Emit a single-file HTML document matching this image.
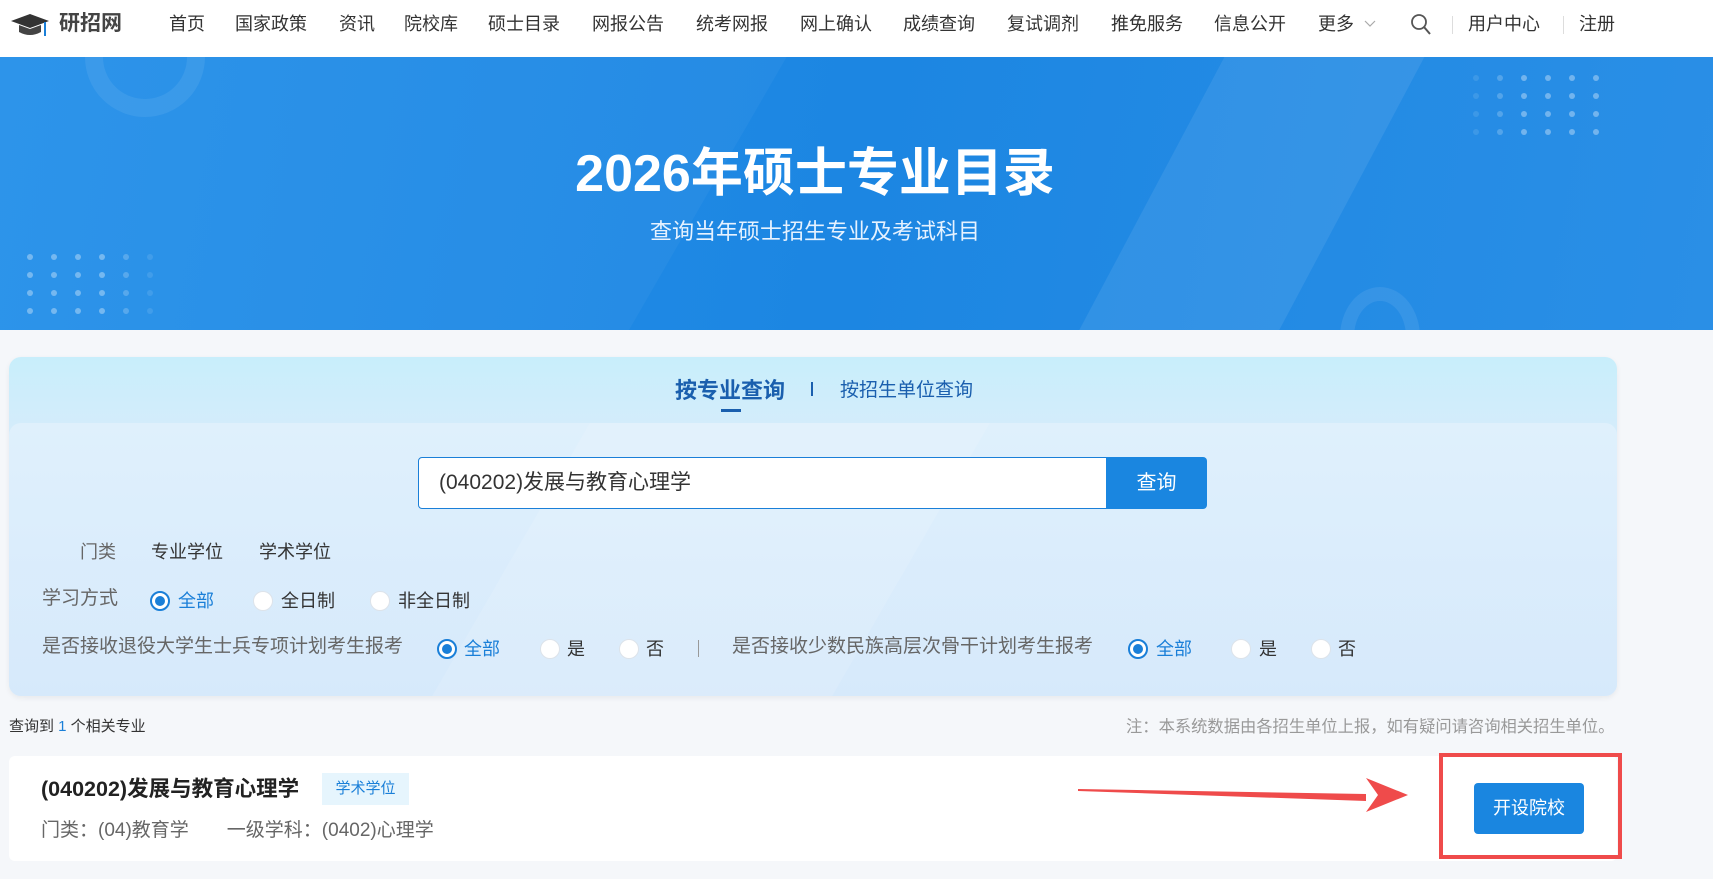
<!DOCTYPE html>
<html><head><meta charset="utf-8"><style>
*{margin:0;padding:0;box-sizing:border-box}
body{width:1713px;height:879px;overflow:hidden;background:#f5f7fa;font-family:"Liberation Sans","Noto Sans CJK SC",sans-serif;color:#333;position:relative}
.abs{position:absolute;white-space:nowrap}
.nav{position:absolute;left:0;top:0;width:1713px;height:57px;background:#fff}
.nav .i{position:absolute;top:12px;font-size:18px;color:#333;line-height:24px}
.banner{position:absolute;left:0;top:57px;width:1713px;height:273px;background:linear-gradient(100deg,#2590ea 0%,#1c86e2 50%,#2a8fe6 100%);overflow:hidden}
.panel{position:absolute;left:9px;top:357px;width:1608px;height:339px;border-radius:12px;background:linear-gradient(180deg,#c8eefb 0%,#d6ecfb 25%,#d9eafb 100%);box-shadow:0 2px 6px rgba(0,0,0,.06);overflow:hidden}
.radio{position:absolute;width:20px;height:20px;border-radius:50%;background:#fff;border:1px solid #dde3ea}
.radio.on{border:2px solid #1a7fd8;background:#fff}
.radio.on::after{content:"";position:absolute;left:3px;top:3px;width:10px;height:10px;border-radius:50%;background:#1a7fd8}
.t18{font-size:18px;line-height:24px}
</style></head><body>
<div class="nav">
  <svg class="abs" style="left:9px;top:12px" width="42" height="28" viewBox="0 0 42 28"><path d="M2 9 L21 2 L40 9 L21 16 Z" fill="#333"/><path d="M10 13 L10 20 Q21 26 32 20 L32 13 L21 17 Z" fill="#444"/><path d="M36 10 L36 24" stroke="#1a7fd8" stroke-width="2"/></svg>
  <div class="abs" style="left:59px;top:11px;font-size:21px;font-weight:bold;color:#444;line-height:26px">研招网</div>
  <div class="i" style="left:169px">首页</div>
  <div class="i" style="left:235px">国家政策</div>
  <div class="i" style="left:339px">资讯</div>
  <div class="i" style="left:404px">院校库</div>
  <div class="i" style="left:488px">硕士目录</div>
  <div class="i" style="left:592px">网报公告</div>
  <div class="i" style="left:696px">统考网报</div>
  <div class="i" style="left:800px">网上确认</div>
  <div class="i" style="left:903px">成绩查询</div>
  <div class="i" style="left:1007px">复试调剂</div>
  <div class="i" style="left:1111px">推免服务</div>
  <div class="i" style="left:1214px">信息公开</div>
  <div class="i" style="left:1318px">更多</div>
  <svg class="abs" style="left:1364px;top:19px" width="12" height="10"><path d="M1 2 L6 7 L11 2" stroke="#aaa" fill="none" stroke-width="1.2"/></svg>
  <svg class="abs" style="left:1410px;top:13px" width="22" height="24"><circle cx="9" cy="9" r="7" stroke="#555" stroke-width="1.8" fill="none"/><path d="M14 14 L20 21" stroke="#555" stroke-width="2"/></svg>
  <div class="abs" style="left:1452px;top:16px;width:1px;height:18px;background:#ddd"></div>
  <div class="i" style="left:1468px">用户中心</div>
  <div class="abs" style="left:1563px;top:16px;width:1px;height:18px;background:#ddd"></div>
  <div class="i" style="left:1579px">注册</div>
</div>
<div class="banner">
  <div class="abs" style="left:85px;top:-60px;width:120px;height:120px;border-radius:50%;border:18px solid rgba(255,255,255,.07)"></div>
  <div class="abs" style="left:-200px;top:-50px;width:900px;height:400px;background:rgba(255,255,255,.04);transform:skewX(-30deg)"></div>
  <div class="abs" style="left:1150px;top:-20px;width:200px;height:320px;background:rgba(255,255,255,.08);transform:skewX(-28deg)"></div>
  <div class="abs" style="left:1340px;top:230px;width:80px;height:100px;border-radius:50%;border:14px solid rgba(255,255,255,.08)"></div>
  <svg class="abs" style="left:24px;top:194px" width="130" height="80"><g fill="rgba(255,255,255,.35)">
  <circle cx="6" cy="6" r="3"/><circle cx="30" cy="6" r="3"/><circle cx="54" cy="6" r="3"/><circle cx="78" cy="6" r="3"/><circle cx="102" cy="6" r="3" opacity=".6"/><circle cx="126" cy="6" r="3" opacity=".3"/>
  <circle cx="6" cy="24" r="3"/><circle cx="30" cy="24" r="3"/><circle cx="54" cy="24" r="3"/><circle cx="78" cy="24" r="3"/><circle cx="102" cy="24" r="3" opacity=".6"/><circle cx="126" cy="24" r="3" opacity=".3"/>
  <circle cx="6" cy="42" r="3"/><circle cx="30" cy="42" r="3"/><circle cx="54" cy="42" r="3"/><circle cx="78" cy="42" r="3"/><circle cx="102" cy="42" r="3" opacity=".6"/><circle cx="126" cy="42" r="3" opacity=".3"/>
  <circle cx="6" cy="60" r="3"/><circle cx="30" cy="60" r="3"/><circle cx="54" cy="60" r="3"/><circle cx="78" cy="60" r="3"/><circle cx="102" cy="60" r="3" opacity=".6"/><circle cx="126" cy="60" r="3" opacity=".3"/></g></svg>
  <svg class="abs" style="left:1470px;top:15px" width="130" height="80"><g fill="rgba(255,255,255,.35)">
  <circle cx="126" cy="6" r="3"/><circle cx="102" cy="6" r="3"/><circle cx="78" cy="6" r="3"/><circle cx="54" cy="6" r="3"/><circle cx="30" cy="6" r="3" opacity=".6"/><circle cx="6" cy="6" r="3" opacity=".3"/>
  <circle cx="126" cy="24" r="3"/><circle cx="102" cy="24" r="3"/><circle cx="78" cy="24" r="3"/><circle cx="54" cy="24" r="3"/><circle cx="30" cy="24" r="3" opacity=".6"/><circle cx="6" cy="24" r="3" opacity=".3"/>
  <circle cx="126" cy="42" r="3"/><circle cx="102" cy="42" r="3"/><circle cx="78" cy="42" r="3"/><circle cx="54" cy="42" r="3"/><circle cx="30" cy="42" r="3" opacity=".6"/><circle cx="6" cy="42" r="3" opacity=".3"/>
  <circle cx="126" cy="60" r="3"/><circle cx="102" cy="60" r="3"/><circle cx="78" cy="60" r="3"/><circle cx="54" cy="60" r="3"/><circle cx="30" cy="60" r="3" opacity=".6"/><circle cx="6" cy="60" r="3" opacity=".3"/></g></svg>
  <div class="abs" style="left:0;width:1630px;top:86px;text-align:center;font-size:52px;font-weight:bold;color:#fff;line-height:62px">2026年硕士专业目录</div>
  <div class="abs" style="left:0;width:1630px;top:161px;text-align:center;font-size:22px;color:#e6f2ff;line-height:28px">查询当年硕士招生专业及考试科目</div>
</div>
<div class="panel">
  <div class="abs" style="left:0;top:66px;width:1608px;height:280px;background:linear-gradient(180deg,#dff0fc,#d6e9fb);border-radius:12px 12px 0 0"></div>
  <div class="abs" style="left:500px;top:66px;width:400px;height:280px;background:rgba(255,255,255,.12);transform:skewX(-30deg)"></div>
  <div class="abs" style="left:666px;top:20px;font-size:22px;font-weight:bold;color:#1a5fae;line-height:28px">按专业查询</div>
  <div class="abs" style="left:712px;top:52px;width:20px;height:3px;background:#1a5fae"></div>
  <div class="abs" style="left:802px;top:25px;width:2px;height:14px;background:#1a5fae"></div>
  <div class="abs" style="left:831px;top:20px;font-size:19px;color:#1a5fae;line-height:28px">按招生单位查询</div>
  <div class="abs" style="left:409px;top:100px;width:689px;height:52px;background:#fff;border:1px solid #1a7fd8;border-radius:4px 0 0 4px"></div>
  <div class="abs" style="left:430px;top:112px;font-size:21px;line-height:28px;color:#333">(040202)发展与教育心理学</div>
  <div class="abs" style="left:1097px;top:100px;width:101px;height:52px;background:#1a86e0;border-radius:0 4px 4px 0;color:#fff;font-size:20px;text-align:center;line-height:52px">查询</div>
  <div class="abs t18" style="left:71px;top:183px;color:#666">门类</div>
  <div class="abs t18" style="left:142px;top:183px;color:#333">专业学位</div>
  <div class="abs t18" style="left:250px;top:183px;color:#333">学术学位</div>
  <div class="abs" style="left:33px;top:230px;color:#666;font-size:19px;line-height:24px">学习方式</div>
  <div class="radio on" style="left:141px;top:234px"></div>
  <div class="abs t18" style="left:169px;top:232px;color:#1a7fd8">全部</div>
  <div class="radio" style="left:244px;top:234px"></div>
  <div class="abs t18" style="left:272px;top:232px">全日制</div>
  <div class="radio" style="left:361px;top:234px"></div>
  <div class="abs t18" style="left:389px;top:232px">非全日制</div>
  <div class="abs" style="left:33px;top:278px;color:#666;font-size:19px;line-height:24px">是否接收退役大学生士兵专项计划考生报考</div>
  <div class="radio on" style="left:428px;top:282px"></div>
  <div class="abs t18" style="left:455px;top:280px;color:#1a7fd8">全部</div>
  <div class="radio" style="left:531px;top:282px"></div>
  <div class="abs t18" style="left:558px;top:280px">是</div>
  <div class="radio" style="left:610px;top:282px"></div>
  <div class="abs t18" style="left:637px;top:280px">否</div>
  <div class="abs" style="left:689px;top:283px;width:1px;height:17px;background:#999"></div>
  <div class="abs" style="left:723px;top:278px;color:#666;font-size:19px;line-height:24px">是否接收少数民族高层次骨干计划考生报考</div>
  <div class="radio on" style="left:1119px;top:282px"></div>
  <div class="abs t18" style="left:1147px;top:280px;color:#1a7fd8">全部</div>
  <div class="radio" style="left:1222px;top:282px"></div>
  <div class="abs t18" style="left:1250px;top:280px">是</div>
  <div class="radio" style="left:1302px;top:282px"></div>
  <div class="abs t18" style="left:1329px;top:280px">否</div>
</div>
<div class="abs" style="left:9px;top:717px;font-size:15px;line-height:20px;color:#333">查询到 <span style="color:#1a7fd8">1</span> 个相关专业</div>
<div class="abs" style="left:1126px;top:716px;font-size:16.3px;line-height:22px;color:#999">注：本系统数据由各招生单位上报，如有疑问请咨询相关招生单位。</div>
<div class="abs" style="left:9px;top:756px;width:1608px;height:105px;background:#fff;border-radius:6px"></div>
<div class="abs" style="left:41px;top:775px;font-size:21.5px;font-weight:bold;color:#222;line-height:28px">(040202)发展与教育心理学</div>
<div class="abs" style="left:322px;top:773px;width:87px;height:32px;background:#e6f5fd;color:#1a7fd8;font-size:15px;line-height:32px;text-align:center">学术学位</div>
<div class="abs" style="left:41px;top:818px;font-size:19px;color:#666;line-height:26px">门类：(04)教育学<span style="display:inline-block;width:38px"></span>一级学科：(0402)心理学</div>
<svg class="abs" style="left:1076px;top:775px" width="335" height="40"><path d="M2 14 L290 19 L290 26 L2 16 Z" fill="#ef4b4b"/><path d="M290 3 L332 20 L290 37 L302 20 Z" fill="#ef4b4b"/></svg>
<div class="abs" style="left:1439px;top:753px;width:183px;height:106px;border:4px solid #ef4b4b"></div>
<div class="abs" style="left:1474px;top:783px;width:110px;height:51px;background:#1a86e0;border-radius:4px;color:#fff;font-size:18px;line-height:51px;text-align:center">开设院校</div>
</body></html>
